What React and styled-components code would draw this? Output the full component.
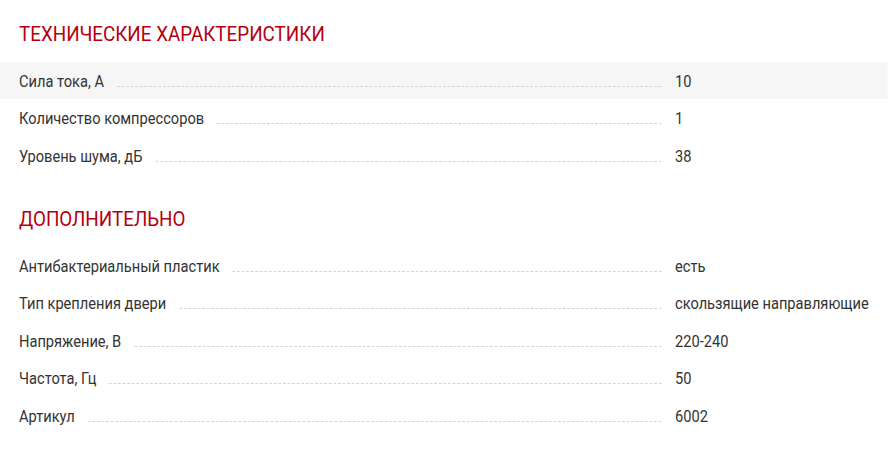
import styled, { createGlobalStyle } from 'styled-components';

// the reference uses a narrow face; Roboto squeezed horizontally comes closest
const SQUEEZE = 0.915;

const GlobalStyle = createGlobalStyle`
  body {
    margin: 0;
    background: #ffffff;
    font-family: Roboto, 'Liberation Sans', sans-serif;
    overflow: hidden;
  }
`;

const Page = styled.div`
  width: ${888 / SQUEEZE}px;
  padding-top: 22px;
  transform: scaleX(${SQUEEZE});
  transform-origin: 0 0;
`;

const Section = styled.section`
  margin-bottom: 33px;
`;

const SectionTitle = styled.h2`
  margin: 0 0 14.5px 0;
  padding-left: ${19 / SQUEEZE}px;
  font-size: 20.6px;
  line-height: 25px;
  font-weight: 400;
  color: #b4000e;
  text-transform: uppercase;
`;

const Row = styled.div`
  box-sizing: border-box;
  display: grid;
  grid-template-columns: ${656 / SQUEEZE}px 1fr;
  align-items: center;
  height: 37.5px;
  padding: 2px 0 0 ${19 / SQUEEZE}px;
  background: ${(p) => (p.shaded ? '#f6f6f6' : 'transparent')};
  font-size: 16px;
  color: #333333;
`;

const NameCell = styled.div`
  display: flex;
  align-items: baseline;
  padding-right: ${13 / SQUEEZE}px;
`;

const Label = styled.span`
  white-space: nowrap;
`;

const Dots = styled.span`
  flex: 1;
  margin-left: ${13 / SQUEEZE}px;
  border-bottom: 1px dashed #d2d2d2;
`;

const Value = styled.div`
  white-space: nowrap;
`;

const sections = [
  {
    title: 'Технические характеристики',
    rows: [
      ['Сила тока, А', '10'],
      ['Количество компрессоров', '1'],
      ['Уровень шума, дБ', '38'],
    ],
  },
  {
    title: 'Дополнительно',
    rows: [
      ['Антибактериальный пластик', 'есть'],
      ['Тип крепления двери', 'скользящие направляющие'],
      ['Напряжение, В', '220-240'],
      ['Частота, Гц', '50'],
      ['Артикул', '6002'],
    ],
  },
];

const App = () => {
  return (
    <>
      <GlobalStyle />
      <Page>
        {sections.map((s, si) => (
          <Section key={si}>
            <SectionTitle>{s.title}</SectionTitle>
            {s.rows.map(([name, value], i) => (
              <Row key={i} shaded={si === 0 && i === 0}>
                <NameCell>
                  <Label>{name}</Label>
                  <Dots />
                </NameCell>
                <Value>{value}</Value>
              </Row>
            ))}
          </Section>
        ))}
      </Page>
    </>
  );
};

export default App;
